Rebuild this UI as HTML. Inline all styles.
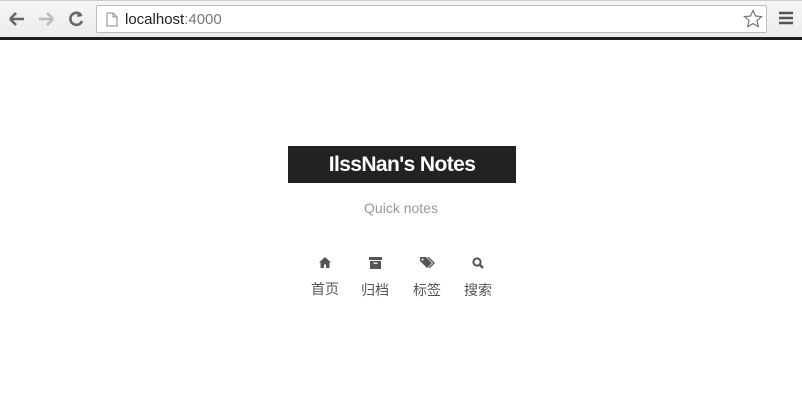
<!DOCTYPE html>
<html><head><meta charset="utf-8"><style>
*{margin:0;padding:0;box-sizing:border-box}
body{width:802px;height:400px;background:#fff;font-family:"Liberation Sans","Noto Sans CJK SC",sans-serif;position:relative;overflow:hidden}
.bar{position:absolute;left:0;top:0;width:802px;height:37px;background:linear-gradient(#f6f6f6,#ececec);border-top:1px solid #ccc}
.line{position:absolute;left:0;top:37px;width:802px;height:3px;background:#1e1e1e}
.url{position:absolute;left:96px;top:5px;width:671px;height:28px;background:#fff;border:1px solid #bdbdbd;border-radius:2px}
.url span{position:absolute;left:28px;top:5px;font-size:15px;color:#222}
.url span b{font-weight:normal;color:#777}
.title{position:absolute;left:288px;top:146px;width:228px;height:37px;background:#222;color:#fff;font-size:21px;font-weight:bold;text-align:center;line-height:37px;letter-spacing:-0.6px}
.sub{position:absolute;left:0;width:802px;top:200px;text-align:center;color:#999;font-size:14px}
.nav{position:absolute;top:257px;width:40px;text-align:center;color:#555}
.nav div{font-size:14px;margin-top:11px}
.nav svg{display:block;margin:0 auto}
</style></head><body>
<div class="bar"></div>
<svg style="position:absolute;left:7px;top:10px" width="80" height="18">
<path d="M3 9h14M3 9l6-6M3 9l6 6" stroke="#666" stroke-width="2.6" fill="none"/>
<path d="M32 9h14M46 9l-6-6M46 9l-6 6" stroke="#bbb" stroke-width="2.6" fill="none"/>
<path d="M74 5a6 6 0 1 0 1 6" stroke="#666" stroke-width="2.6" fill="none"/><path d="M71 2l5 4-6 1z" fill="#666"/>
</svg>
<div class="url"><svg style="position:absolute;left:9px;top:6px" width="12" height="15"><path d="M1 1h6l4 4v9H1z M7 1v4h4" stroke="#888" fill="#fff"/></svg><span>localhost<b>:4000</b></span>
<svg style="position:absolute;left:646px;top:3px" width="20" height="20"><path d="M10 1.5l2.5 5.5 6 .6-4.5 4 1.3 6L10 14.6 4.7 17.6 6 11.6 1.5 7.6l6-.6z" stroke="#777" stroke-width="1.2" fill="none"/></svg></div>
<svg style="position:absolute;left:779px;top:11px" width="14" height="14"><path d="M0 2h14M0 7h14M0 12h14" stroke="#555" stroke-width="2.4"/></svg>
<div class="line"></div>
<div class="title">IlssNan's Notes</div>
<div class="sub">Quick notes</div>
<div class="nav" style="left:305px"><svg width="12" height="11"><path d="M6 0L0 5.5h1.5V11h3.5V7.5h2V11h3.5V5.5H12z" fill="#555"/></svg><div>首页</div></div>
<div class="nav" style="left:355px"><svg width="13" height="12"><rect x="0" y="0" width="13" height="3" fill="#555"/><rect x="1" y="4" width="11" height="8" fill="#555"/><rect x="4.5" y="5.5" width="4" height="1.3" fill="#fff"/></svg><div>归档</div></div>
<div class="nav" style="left:407px"><svg width="15" height="12"><path d="M0 0h6l6 6-5 5-7-7z" fill="#555"/><circle cx="2.5" cy="2.5" r="1" fill="#fff"/><path d="M8 0l6 6-5 5" stroke="#555" stroke-width="1.4" fill="none"/></svg><div>标签</div></div>
<div class="nav" style="left:458px"><svg width="12" height="12"><circle cx="5" cy="5" r="3.6" stroke="#555" stroke-width="2" fill="none"/><path d="M7.5 7.5L11 11" stroke="#555" stroke-width="2.4"/></svg><div>搜索</div></div>
</body></html>
